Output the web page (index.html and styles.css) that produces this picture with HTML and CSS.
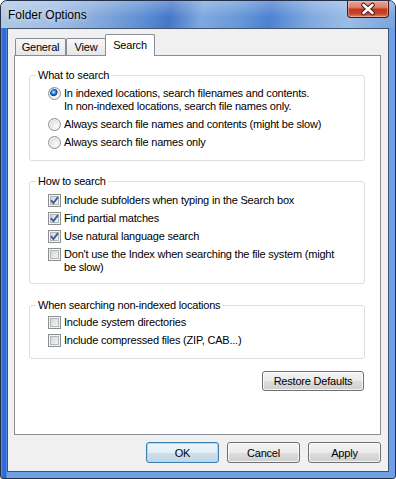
FILE: index.html
```html
<!DOCTYPE html>
<html>
<head>
<meta charset="utf-8">
<title>Folder Options</title>
<link rel="stylesheet" href="styles.css">
</head>
<body>
<div class="window">
  <div class="titlebar">
    <span class="title">Folder Options</span>
    <div class="close">
      <svg width="42" height="17" viewBox="0 0 42 17">
        <path d="M16.5 5 L25.5 13 M25.5 5 L16.5 13" stroke="#4a1a12" stroke-width="4.6" stroke-linecap="round" fill="none"/>
        <path d="M16.5 5 L25.5 13 M25.5 5 L16.5 13" stroke="#ffffff" stroke-width="2.6" stroke-linecap="round" fill="none"/>
      </svg>
    </div>
  </div>
  <div class="client">
    <div class="tabs">
      <div class="tab tab-general">General</div>
      <div class="tab tab-view">View</div>
      <div class="tab tab-search active">Search</div>
    </div>
    <div class="panel">
      <fieldset class="group g1">
        <legend>What to search</legend>
        <div class="opt two-line"><span class="rb on"></span><span class="lbl">In indexed locations, search filenames and contents.<br>In non-indexed locations, search file names only.</span></div>
        <div class="opt"><span class="rb"></span><span class="lbl">Always search file names and contents (might be slow)</span></div>
        <div class="opt"><span class="rb"></span><span class="lbl">Always search file names only</span></div>
      </fieldset>
      <fieldset class="group g2">
        <legend>How to search</legend>
        <div class="opt"><span class="cb on"><svg width="11" height="11" viewBox="0 0 11 11"><path d="M2 5.2 L4.4 8 L9 2.2" stroke="#3d5a9c" stroke-width="1.9" fill="none"/></svg></span><span class="lbl">Include subfolders when typing in the Search box</span></div>
        <div class="opt"><span class="cb on"><svg width="11" height="11" viewBox="0 0 11 11"><path d="M2 5.2 L4.4 8 L9 2.2" stroke="#3d5a9c" stroke-width="1.9" fill="none"/></svg></span><span class="lbl">Find partial matches</span></div>
        <div class="opt"><span class="cb on"><svg width="11" height="11" viewBox="0 0 11 11"><path d="M2 5.2 L4.4 8 L9 2.2" stroke="#3d5a9c" stroke-width="1.9" fill="none"/></svg></span><span class="lbl">Use natural language search</span></div>
        <div class="opt"><span class="cb"></span><span class="lbl">Don't use the Index when searching the file system (might<br>be slow)</span></div>
      </fieldset>
      <fieldset class="group g3">
        <legend>When searching non-indexed locations</legend>
        <div class="opt"><span class="cb"></span><span class="lbl">Include system directories</span></div>
        <div class="opt"><span class="cb"></span><span class="lbl">Include compressed files (ZIP, CAB...)</span></div>
      </fieldset>
      <div class="restore-row">
        <button class="btn restore">Restore Defaults</button>
      </div>
    </div>
    <div class="buttons">
      <button class="btn default">OK</button>
      <button class="btn">Cancel</button>
      <button class="btn">Apply</button>
    </div>
  </div>
</div>
</body>
</html>
```
FILE: styles.css
```css
html, body {
  margin: 0;
  padding: 0;
  background: #ffffff;
}

body {
  font-family: "Liberation Sans", Arial, sans-serif;
  font-size: 11px;
  color: #000;
}

.window {
  width: 396px;
  height: 479px;
  box-sizing: border-box;
  border: 1px solid #22304a;
  border-radius: 7px 7px 3px 3px;
  background: linear-gradient(to right, #5b93e6 0, #2c68d3 2px, #2f6dd8 5px, #6fa0e6 6px);
  display: flex;
  flex-direction: column;
  overflow: hidden;
}

.titlebar {
  height: 27px;
  flex: none;
  display: flex;
  justify-content: space-between;
  align-items: flex-start;
  background:
    linear-gradient(to bottom, rgba(255,255,255,0.25), rgba(255,255,255,0) 60%),
    linear-gradient(100deg, #b3c9e5 0%, #a1bee4 14%, #88abdd 24%, #5f8fd3 36%, #4577c9 43%, #7fa8df 51%, #6a99d8 60%, #4d81d0 68%, #7fa8df 78%, #9bbde6 88%, #7aa3dc 100%);
}

.title {
  font-size: 12px;
  line-height: 14px;
  margin: 7px 0 0 7px;
  color: #000;
  text-shadow: 0 0 5px rgba(255,255,255,0.8);
}

.close {
  width: 42px;
  height: 17px;
  box-sizing: border-box;
  margin-right: 6px;
  border: 1px solid #4b1710;
  border-top: none;
  border-radius: 0 0 4px 4px;
  background: linear-gradient(to bottom, #eba595 0%, #dc7f6b 40%, #c4371f 52%, #c8432a 78%, #e07f62 100%);
  box-shadow: inset 0 0 0 1px rgba(255,210,200,0.45);
}

.close svg {
  display: block;
  margin: -1px 0 0 -1px;
}

.client {
  flex: 1;
  margin: 0 6px 6px 6px;
  border: 1px solid #3f526e;
  background: #f0f0f0;
  padding: 5px 7px 0 6px;
  display: flex;
  flex-direction: column;
  letter-spacing: -0.2px;
}

.tabs {
  display: flex;
  align-items: flex-end;
  height: 21px;
  padding-left: 1px;
  position: relative;
  z-index: 1;
}

.tab {
  box-sizing: border-box;
  height: 17px;
  border: 1px solid #898c95;
  border-bottom: none;
  background: linear-gradient(to bottom, #f7f7f7, #e6e6e6);
  text-align: center;
  line-height: 16px;
  border-radius: 2px 2px 0 0;
}

.tab-general { width: 51px; }
.tab-view { width: 40px; margin-left: 0; }
.tab-search { width: 50px; margin-left: -1px; }

.tab.active {
  height: 22px;
  margin-bottom: -1px;
  background: #ffffff;
  line-height: 20px;
}

.panel {
  box-sizing: border-box;
  height: 380px;
  border: 1px solid #898c95;
  background: #ffffff;
  padding: 0 15px 0 14px;
  display: flex;
  flex-direction: column;
}

.group {
  margin: 0;
  min-width: 0;
  border: 1px solid #d5dfe5;
  border-radius: 3px;
  padding: 0;
}

.group legend {
  padding: 0 2px;
  margin-left: 6px;
  line-height: 13px;
}

.g1 { margin-top: 13px; padding: 5px 0 11px 0; }
.g2 { margin-top: 14px; padding: 6px 0 9px 0; }
.g3 { margin-top: 15px; padding: 4px 0 11px 0; }

.opt {
  display: flex;
  align-items: flex-start;
  line-height: 13px;
  margin-left: 18px;
}

.opt + .opt {
  margin-top: 5px;
}

.lbl {
  margin-left: 3px;
  white-space: nowrap;
}

.rb {
  flex: none;
  width: 13px;
  height: 13px;
  box-sizing: border-box;
  border-radius: 50%;
  border: 1px solid #8d9094;
  background: radial-gradient(circle at 65% 65%, #fbfbfb 0, #e6e8ea 45%, #c9ced4 100%);
  box-shadow: inset 0 0 0 1px #f4f4f4;
}

.rb.on {
  background:
    radial-gradient(circle at 42% 38%, #c6ecff 0, #5fb4ea 1.2px, #1c64b8 2.6px, #0e3f80 3.6px, rgba(14,63,128,0) 4.2px),
    radial-gradient(circle at 65% 65%, #fbfbfb 0, #e6e8ea 45%, #c9ced4 100%);
}

.cb {
  flex: none;
  width: 13px;
  height: 13px;
  box-sizing: border-box;
  border: 1px solid #8e8f8f;
  background: linear-gradient(135deg, #c9ccd1 0%, #e4e6e8 50%, #f8f8f8 100%);
  box-shadow: inset 0 0 0 1px #f4f4f4, inset 0 0 0 2px #b2b6bb;
}

.cb svg {
  display: block;
}

.restore-row {
  display: flex;
  justify-content: flex-end;
  margin-top: 12px;
  margin-right: 1px;
}

.btn {
  box-sizing: border-box;
  height: 21px;
  width: 73px;
  padding: 0;
  margin: 0;
  font-family: "Liberation Sans", Arial, sans-serif;
  font-size: 11px;
  letter-spacing: -0.2px;
  color: #000;
  border: 1px solid #707070;
  border-radius: 3px;
  background: linear-gradient(to bottom, #f3f3f3 0%, #ebebeb 50%, #dddddd 51%, #cfcfcf 100%);
  box-shadow: inset 0 0 0 1px rgba(255,255,255,0.75);
}

.btn.restore {
  width: 102px;
  height: 20px;
}

.btn.default {
  border-color: #3c7fb1;
  background: linear-gradient(to bottom, #eef6fb 0%, #e3eef6 50%, #cfe0ec 51%, #c1d6e6 100%);
  box-shadow: inset 0 0 0 1px #a9dbf6;
}

.buttons {
  display: flex;
  justify-content: flex-end;
  gap: 8px;
  margin-top: 7px;
}
```
